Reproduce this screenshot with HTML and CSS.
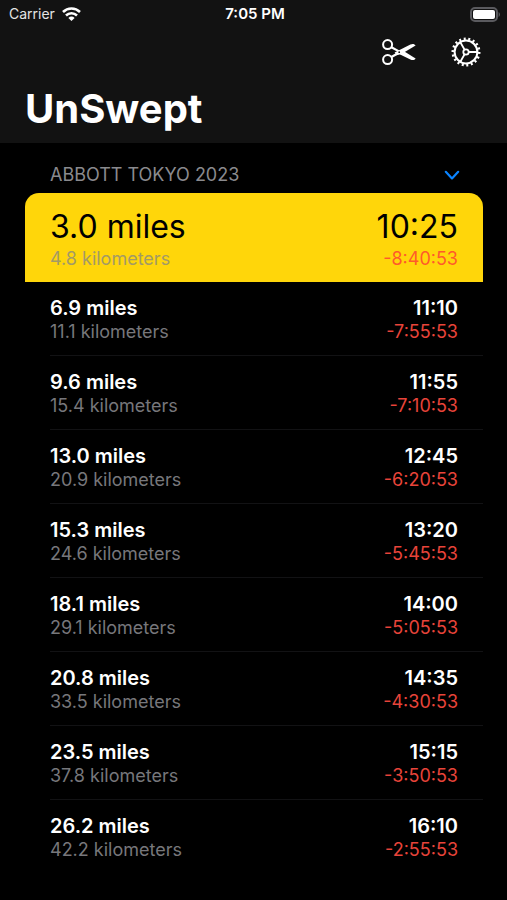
FILE: index.html
```html
<!DOCTYPE html>
<html lang="en">
<head>
    <meta charset="UTF-8">
    <meta name="viewport" content="width=device-width, initial-scale=1.0">
    <title>UnSwept</title>
    <link rel="stylesheet" href="styles.css">
</head>
<body>
    <header>
        <!-- Status bar -->
        <div class="status-bar">
            <div class="carrier">
                <span>Carrier</span>
                <svg width="19" height="14" viewBox="0 0 19 14" fill="none" stroke="#fff" stroke-width="2.6">
                    <path d="M1 5 A12.2 12.2 0 0 1 18 5"/>
                    <path d="M4 8.5 A8 8 0 0 1 15 8.5"/>
                    <path d="M6.4 10.9 A4.4 4.4 0 0 1 12.6 10.9 L9.5 14 Z" fill="#fff" stroke="none"/>
                </svg>
            </div>
            <span class="clock">7:05 PM</span>
            <svg class="battery" width="31" height="15" viewBox="0 0 31 15">
                <rect x="1" y="1" width="26" height="13" rx="4" fill="none" stroke="#5a5a5e" stroke-width="2"/>
                <rect x="3" y="3" width="22" height="9" rx="2" fill="#fff"/>
                <path d="M28.6 5 a3 3 0 0 1 0 5 Z" fill="#5a5a5e"/>
            </svg>
        </div>

        <div class="toolbar">
            <button aria-label="Cutoffs">
                <svg width="34" height="28" viewBox="0 0 34 28" fill="none" stroke="#fff" stroke-width="2">
                    <circle cx="5.6" cy="6.6" r="4.5"/>
                    <circle cx="5.6" cy="21.6" r="4.5"/>
                    <path d="M9.4 9.2 L17 13.4 M9.4 19 L17 14.8" stroke-width="2.2"/>
                    <path d="M12.6 14.6 L28.4 6.6 C30.6 5.5 32.6 5.9 33.6 7.6 L19.4 16 L14.6 17.2 Z" fill="#fff" stroke="none"/>
                    <path d="M17.6 16.2 L22.4 13.4 L33.6 20.4 C32.6 22.1 30.6 22.5 28.4 21.5 Z" fill="#fff" stroke="none"/>
                    <circle cx="17.2" cy="14.2" r="0.9" fill="#121212" stroke="none"/>
                </svg>
            </button>
            <button aria-label="Settings">
                <svg width="30" height="30" viewBox="0 0 30 30" fill="none" stroke="#fff" stroke-width="1.8">
                    <circle cx="15" cy="15" r="13.2" stroke-width="2.6" pathLength="54" stroke-dasharray="1.3 1.7"/>
                    <circle cx="15" cy="15" r="11.4" stroke-width="2"/>
                    <circle cx="15" cy="15" r="2.7"/>
                    <path d="M17.7 15 H26.4 M13.6 12.7 L9.2 5 M13.6 17.3 L9.2 25"/>
                </svg>
            </button>
        </div>

        <h1>UnSwept</h1>
    </header>

    <main>
        <div class="section-head">
            <h2>ABBOTT TOKYO 2023</h2>
            <button aria-label="Collapse section" aria-expanded="true" aria-controls="cutoffs">
                <svg width="16" height="10" viewBox="0 0 16 10" fill="none" stroke="#0a84ff" stroke-width="2.2" stroke-linecap="round" stroke-linejoin="round">
                    <path d="M1.8 1.8 L8 8.4 L14.2 1.8"/>
                </svg>
            </button>
        </div>

        <ul class="cutoffs" id="cutoffs">
            <li class="current">
                <div class="main-line"><span>3.0 miles</span><span>10:25</span></div>
                <div class="sub-line"><span>4.8 kilometers</span><span class="left">-8:40:53</span></div>
            </li>
            <li>
                <div class="main-line"><span>6.9 miles</span><span>11:10</span></div>
                <div class="sub-line"><span>11.1 kilometers</span><span class="left">-7:55:53</span></div>
            </li>
            <li>
                <div class="main-line"><span>9.6 miles</span><span>11:55</span></div>
                <div class="sub-line"><span>15.4 kilometers</span><span class="left">-7:10:53</span></div>
            </li>
            <li>
                <div class="main-line"><span>13.0 miles</span><span>12:45</span></div>
                <div class="sub-line"><span>20.9 kilometers</span><span class="left">-6:20:53</span></div>
            </li>
            <li>
                <div class="main-line"><span>15.3 miles</span><span>13:20</span></div>
                <div class="sub-line"><span>24.6 kilometers</span><span class="left">-5:45:53</span></div>
            </li>
            <li>
                <div class="main-line"><span>18.1 miles</span><span>14:00</span></div>
                <div class="sub-line"><span>29.1 kilometers</span><span class="left">-5:05:53</span></div>
            </li>
            <li>
                <div class="main-line"><span>20.8 miles</span><span>14:35</span></div>
                <div class="sub-line"><span>33.5 kilometers</span><span class="left">-4:30:53</span></div>
            </li>
            <li>
                <div class="main-line"><span>23.5 miles</span><span>15:15</span></div>
                <div class="sub-line"><span>37.8 kilometers</span><span class="left">-3:50:53</span></div>
            </li>
            <li>
                <div class="main-line"><span>26.2 miles</span><span>16:10</span></div>
                <div class="sub-line"><span>42.2 kilometers</span><span class="left">-2:55:53</span></div>
            </li>
        </ul>
    </main>
</body>
</html>
```
FILE: styles.css
```css
body {
    font-family: Inter, "Liberation Sans", sans-serif;
    margin: 0;
    background-color: #000;
    color: #fff;
}

h1, h2, ul {
    margin: 0;
    padding: 0;
}

svg {
    display: block;
}

button {
    padding: 0;
    background: none;
    border: none;
    cursor: pointer;
}

header {
    background-color: #121212;
    padding-bottom: 10px;
}

.status-bar {
    display: grid;
    grid-template-columns: 1fr auto 1fr;
    align-items: center;
    padding: 3px 6px 0 9px;
    font-size: 14px;
    line-height: 22px;
}

.carrier {
    display: flex;
    align-items: center;
    gap: 7px;
    color: #e4e4e4;
}

.clock {
    font-size: 15px;
    font-weight: 600;
}

.battery {
    justify-self: end;
}

.toolbar {
    display: flex;
    justify-content: flex-end;
    align-items: center;
    gap: 35px;
    padding: 12px 26px 0;
}

h1 {
    padding: 18px 25px 0;
    font-size: 40px;
    line-height: 48px;
    font-weight: 700;
}

main {
    padding: 20px 24px 20px 25px;
}

.section-head {
    display: flex;
    justify-content: space-between;
    align-items: center;
    padding: 0 23px 6px 25px;
}

h2 {
    font-size: 18px;
    line-height: 24px;
    font-weight: 400;
    color: #8a8a8e;
}

.cutoffs {
    list-style: none;
}

.cutoffs li {
    margin-left: 25px;
    padding: 14px 25px 11px 0;
    border-bottom: 1px solid #121214;
}

.cutoffs li:last-child {
    border-bottom: none;
}

.main-line,
.sub-line {
    display: flex;
    justify-content: space-between;
}

.main-line {
    font-size: 20px;
    line-height: 24px;
    font-weight: 600;
}

.sub-line {
    font-size: 18px;
    line-height: 24px;
    color: #77777b;
}

.left {
    color: #e8443a;
}

.cutoffs .current {
    margin-left: 0;
    padding: 14px 25px 11px;
    border-bottom: none;
    border-radius: 14px 14px 0 0;
    background-color: #ffd60a;
    color: #000;
}

.current .main-line {
    font-size: 32px;
    line-height: 40px;
    font-weight: 400;
}

.current .sub-line {
    color: #a39a66;
}

.current .left {
    color: #ff5a2a;
}
```
